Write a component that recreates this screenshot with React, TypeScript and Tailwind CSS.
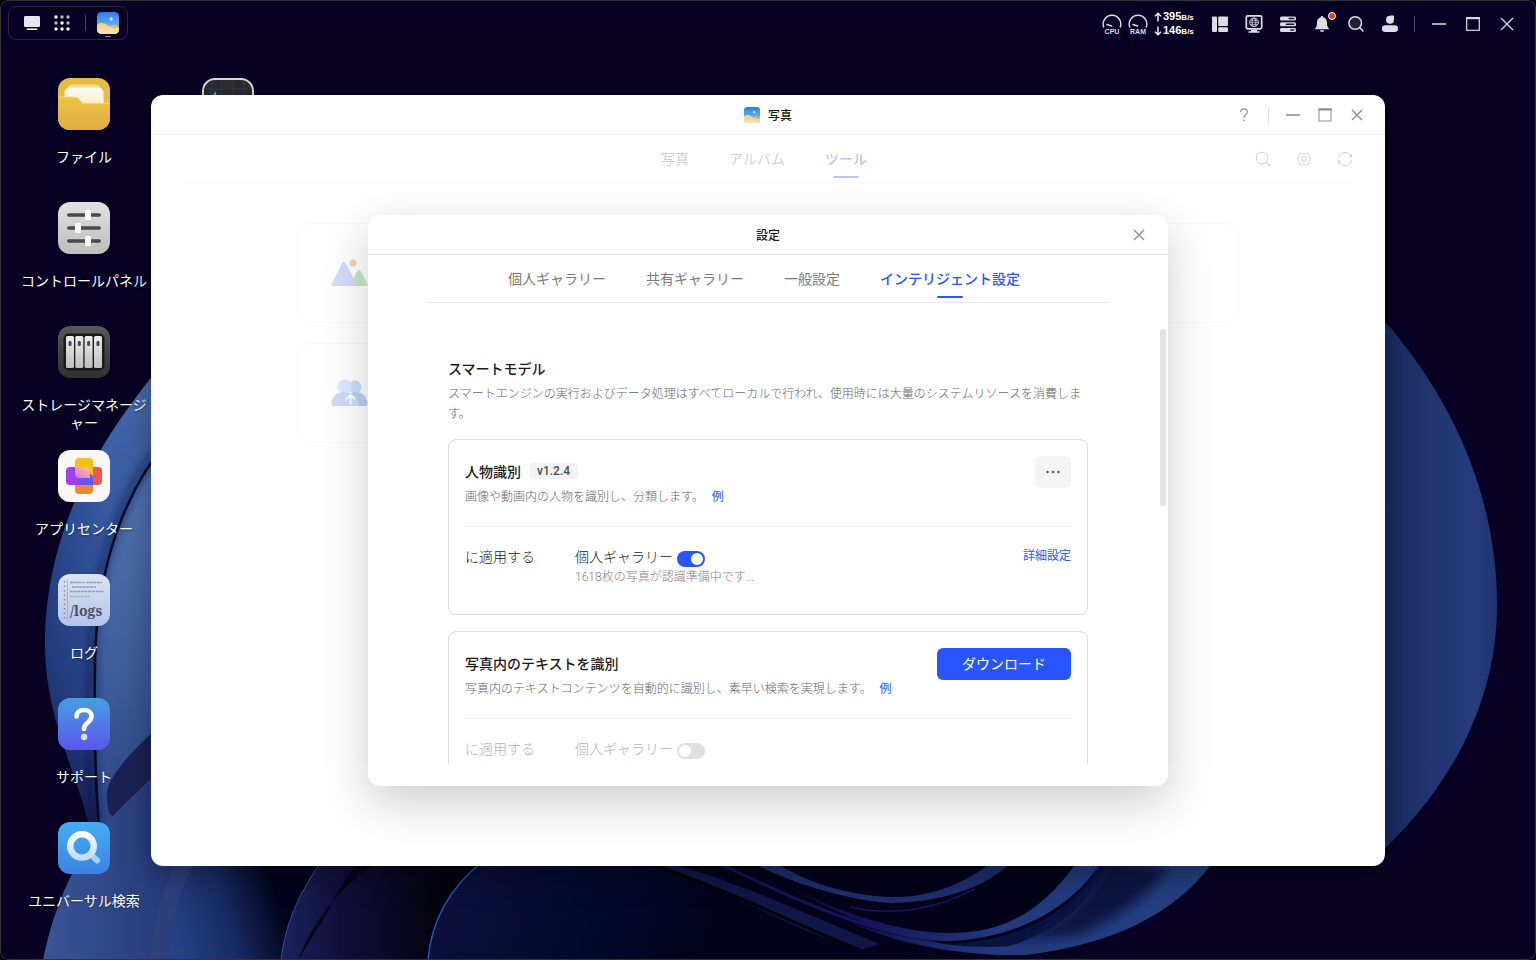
import { useState } from 'react';
import type { FC, ReactNode } from 'react';

interface IconProps {
  className?: string;
}

interface DesktopApp {
  name: string;
  icon: ReactNode;
}

interface ModelCardProps {
  id: string;
  title: string;
  version?: string;
  description: string;
  action: ReactNode;
  enabled: boolean;
  status?: string;
}

/* ---------- Wallpaper ---------- */

const Wallpaper: FC = () => (
  <svg
    className="absolute inset-0 h-full w-full"
    viewBox="0 0 1536 960"
    preserveAspectRatio="xMidYMid slice"
    aria-hidden="true"
  >
    <defs>
      <linearGradient id="petalOuter" x1="0" y1="0" x2="1" y2="0">
        <stop offset="0" stopColor="#1f3a78" />
        <stop offset="0.4" stopColor="#34569f" />
        <stop offset="1" stopColor="#3f62a8" />
      </linearGradient>
      <linearGradient id="petalFade" x1="0" y1="0" x2="0" y2="1">
        <stop offset="0" stopColor="#5f86c4" stopOpacity="0.5" />
        <stop offset="0.5" stopColor="#2a4a90" stopOpacity="0.2" />
        <stop offset="1" stopColor="#0a0a3a" stopOpacity="0.75" />
      </linearGradient>
      <linearGradient id="petalInner" x1="0" y1="0" x2="0" y2="1">
        <stop offset="0" stopColor="#5478b6" />
        <stop offset="0.5" stopColor="#40629f" />
        <stop offset="1" stopColor="#2c4584" />
      </linearGradient>
      <linearGradient id="base" x1="45" y1="0" x2="290" y2="0" gradientUnits="userSpaceOnUse">
        <stop offset="0" stopColor="#3a5596" />
        <stop offset="0.5" stopColor="#263a7a" />
        <stop offset="0.65" stopColor="#203a7a" />
        <stop offset="1" stopColor="#04051f" />
      </linearGradient>
      <linearGradient id="baseBlue" x1="168" y1="920" x2="275" y2="890" gradientUnits="userSpaceOnUse">
        <stop offset="0" stopColor="#264286" />
        <stop offset="0.5" stopColor="#182c64" />
        <stop offset="1" stopColor="#03041c" />
      </linearGradient>
      <linearGradient id="fold" x1="285" y1="0" x2="440" y2="0" gradientUnits="userSpaceOnUse">
        <stop offset="0" stopColor="#1a2258" />
        <stop offset="0.35" stopColor="#120e3c" />
        <stop offset="1" stopColor="#03020f" />
      </linearGradient>
      <linearGradient id="bowl" x1="430" y1="860" x2="700" y2="960" gradientUnits="userSpaceOnUse">
        <stop offset="0" stopColor="#0f1040" />
        <stop offset="0.5" stopColor="#040a30" />
        <stop offset="1" stopColor="#01031a" />
      </linearGradient>
      <linearGradient id="ribbon" x1="850" y1="0" x2="1210" y2="0" gradientUnits="userSpaceOnUse">
        <stop offset="0" stopColor="#120f52" />
        <stop offset="0.4" stopColor="#22397c" />
        <stop offset="1" stopColor="#243f80" />
      </linearGradient>
      <linearGradient id="rightPetal" x1="1385" y1="0" x2="1497" y2="0" gradientUnits="userSpaceOnUse">
        <stop offset="0" stopColor="#1b2c60" />
        <stop offset="0.8" stopColor="#263c7c" />
        <stop offset="1" stopColor="#1f3472" />
      </linearGradient>
      <filter id="soft" x="-20%" y="-20%" width="140%" height="140%">
        <feGaussianBlur stdDeviation="5" />
      </filter>
    </defs>
    <rect width="1536" height="960" fill="#080023" />

    {/* Left petals */}
    <path d="M170 355C110 425 45 520 45 645C46 720 75 765 92 835L200 835L200 355Z" fill="url(#petalOuter)" />
    <path d="M170 355C110 425 45 520 45 645C46 720 75 765 92 835L200 835L200 355Z" fill="url(#petalFade)" />
    <path d="M170 438C125 490 97 565 96 660C95 730 96 780 101 835L200 835L200 438Z" fill="url(#petalInner)" />
    <path d="M168 438C123 490 94 565 92 660C91 730 92 780 96 825" fill="none" stroke="#0a1038" strokeWidth="8" opacity="0.5" filter="url(#soft)" />
    <path d="M170 438C125 490 97 565 95 660C94 730 95 780 99 825" fill="none" stroke="#060828" strokeWidth="2.500" />
    <path d="M43 960C54 905 78 850 113 816C125 803 138 790 160 768L340 768L340 960Z" fill="url(#base)" />
    <path d="M165 722C140 742 104 778 107 797C107 808 109 815 113 816C125 803 145 784 165 766Z" fill="#1b2252" />

    {/* Bottom folds */}
    <path d="M150 960C152 925 162 890 178 860L196 860C180 890 168 925 170 960Z" fill="#34427c" opacity="0.6" />
    <path d="M170 960C168 925 180 890 196 860L340 860L300 960Z" fill="url(#baseBlue)" />
    <path d="M281 960C285 925 298 895 321 862L480 862L440 960Z" fill="url(#fold)" />
    <path d="M281 960C285 925 298 895 321 862" fill="none" stroke="#2d4fa6" strokeWidth="1" />
    <path d="M298 960C312 925 335 890 378 862L358 862C345 880 334 895 328 912Z" fill="#02020f" opacity="0.8" />
    <path d="M428 960C431 925 447 890 482 862L900 862L960 960Z" fill="url(#bowl)" />
    <path d="M428 960C431 925 447 890 482 862" fill="none" stroke="#2456b8" strokeWidth="1.500" />

    {/* Ribbons running down to the right */}
    <path d="M640 862C720 885 780 925 870 948L960 960L1010 960C1100 950 1180 915 1214 862Z" fill="#03021a" />
    <path d="M665 862C740 882 800 912 880 944L860 950C780 925 730 890 650 862Z" fill="#101648" />
    <path d="M644 862C730 890 790 922 860 950" fill="none" stroke="#01010a" strokeWidth="3" />
    <path d="M715 862C790 895 850 932 1000 955" fill="none" stroke="#15145c" strokeWidth="3" />
    <path d="M750 862C790 882 840 899 890 903C945 902 985 887 1012 862L992 862C960 887 925 898 890 897C845 895 805 882 775 862Z" fill="#1d2f6e" />
    <path d="M850 907C895 917 935 909 975 889" fill="none" stroke="#17145a" strokeWidth="1.500" />
    <path d="M800 893C860 925 910 942 950 941C1015 938 1070 910 1102 862L1077 862C1040 915 1000 932 955 933C915 934 865 922 800 893Z" fill="url(#ribbon)" />
    <path d="M1102 862C1070 915 1020 940 950 944L1030 953C1080 947 1125 925 1160 862Z" fill="#0a1340" />
    <path d="M850 922C900 945 960 956 1025 955C1110 945 1175 915 1213 862L1110 862C1090 905 1060 930 1010 946C965 950 900 940 850 922Z" fill="url(#ribbon)" />
    <path d="M1104 860C1090 900 1055 930 1010 942L1080 934C1120 915 1150 895 1168 868Z" fill="#0a1542" filter="url(#soft)" />

    {/* Right petal */}
    <path d="M1370 305C1455 395 1497 500 1497 605C1497 700 1452 790 1370 862Z" fill="url(#rightPetal)" />
  </svg>
);

/* ---------- App icons ---------- */

const PhotosIcon: FC<IconProps> = ({ className }) => (
  <svg className={className} viewBox="0 0 24 24" aria-hidden="true">
    <defs>
      <linearGradient id="sky" x1="0" y1="0" x2="0" y2="1">
        <stop offset="0" stopColor="#2e7cea" />
        <stop offset="0.7" stopColor="#6bb8f6" />
      </linearGradient>
      <linearGradient id="sand" x1="0" y1="0" x2="0" y2="1">
        <stop offset="0" stopColor="#f6c98a" />
        <stop offset="1" stopColor="#fae3b4" />
      </linearGradient>
      <clipPath id="photosClip">
        <rect width="24" height="24" rx="5" />
      </clipPath>
    </defs>
    <g clipPath="url(#photosClip)">
      <rect width="24" height="24" fill="url(#sky)" />
      <circle cx="15.4" cy="7.6" r="1.8" fill="#cdeafe" />
      <path d="M10 24C11 19 14 14 18 14C21 14 22 16 24 15.500V24Z" fill="#e9b46a" />
      <path d="M0 14C3 11 7 11.500 10 13.500C14 16 17 18 24 17.500V24H0Z" fill="url(#sand)" />
    </g>
  </svg>
);

const FilesIcon: FC = () => (
  <svg className="size-13" viewBox="0 0 52 52" aria-hidden="true">
    <defs>
      <linearGradient id="folderFront" x1="0" y1="0" x2="0" y2="1">
        <stop offset="0" stopColor="#edc348" />
        <stop offset="1" stopColor="#dfae3d" />
      </linearGradient>
      <linearGradient id="folderPaper" x1="0" y1="0" x2="0" y2="1">
        <stop offset="0" stopColor="#fffdf5" />
        <stop offset="1" stopColor="#f7e3b0" />
      </linearGradient>
    </defs>
    <rect width="52" height="52" rx="12" fill="#e8bc3c" />
    <path d="M10 14V10C10 8 11.500 6.500 14 6.500H38C40.500 6.500 42 8 42 10V14Z" fill="#f4dc95" />
    <rect x="6.500" y="9.500" width="39" height="26" rx="5" fill="url(#folderPaper)" />
    <path d="M0 19H16.500C18.500 19 19.500 19.700 21 21.200L23.500 23.800C24.800 25 26 25.300 28 25.300H52V40C52 47 47 52 40 52H12C5 52 0 47 0 40Z" fill="url(#folderFront)" />
    <path d="M0 19H16.500C18.500 19 19.500 19.700 21 21.200L23.500 23.800C24.800 25 26 25.300 28 25.300H52" fill="none" stroke="#f5dc8c" strokeWidth="0.8" />
  </svg>
);

const ControlPanelIcon: FC = () => (
  <svg className="size-13" viewBox="0 0 52 52" aria-hidden="true">
    <defs>
      <linearGradient id="silver" x1="0" y1="0" x2="0" y2="1">
        <stop offset="0" stopColor="#e2e2e2" />
        <stop offset="1" stopColor="#bdbdbd" />
      </linearGradient>
    </defs>
    <rect width="52" height="52" rx="12" fill="url(#silver)" />
    <g stroke="#4a4a4a" strokeWidth="3.600" strokeLinecap="round">
      <path d="M10.800 13H41.200M10.800 26H41.200M10.800 39H41.200" />
    </g>
    <g fill="#fafafa">
      <rect x="27" y="8" width="6" height="10" rx="1.500" />
      <rect x="17" y="21" width="6" height="10" rx="1.500" />
      <rect x="27" y="34" width="6" height="10" rx="1.500" />
    </g>
  </svg>
);

const StorageIcon: FC = () => (
  <svg className="size-13" viewBox="0 0 52 52" aria-hidden="true">
    <defs>
      <linearGradient id="caseFill" x1="0" y1="0" x2="0" y2="1">
        <stop offset="0" stopColor="#585858" />
        <stop offset="1" stopColor="#303030" />
      </linearGradient>
      <linearGradient id="driveFill" x1="0" y1="0" x2="0" y2="1">
        <stop offset="0" stopColor="#ededed" />
        <stop offset="1" stopColor="#bdbdbd" />
      </linearGradient>
    </defs>
    <rect width="52" height="52" rx="12" fill="url(#caseFill)" />
    <rect x="5.500" y="7.500" width="41" height="37" rx="5" fill="#191919" />
    {[8, 17.3, 26.6, 36].map((x) => (
      <g key={x}>
        <rect x={x} y="10" width="8" height="32" rx="1.500" fill="url(#driveFill)" />
        <rect x={x + 2.5} y="15" width="3" height="5" rx="1" fill="#4a4a55" />
      </g>
    ))}
  </svg>
);

const AppCenterIcon: FC = () => (
  <svg className="size-13" viewBox="0 0 52 52" aria-hidden="true">
    <defs>
      <linearGradient id="blend" x1="0" y1="1" x2="1" y2="0">
        <stop offset="0" stopColor="#d374d8" />
        <stop offset="1" stopColor="#ffc488" />
      </linearGradient>
    </defs>
    <rect width="52" height="52" rx="12" fill="#f8f8f9" />
    <rect x="17" y="26" width="18" height="18" rx="4" fill="#f5862e" />
    <rect x="26" y="17" width="18" height="18" rx="4" fill="#ea5a4b" />
    <rect x="17" y="8" width="18" height="20" rx="4" fill="#fbbd18" />
    <rect x="8" y="17" width="20" height="18" rx="4" fill="#a33df0" />
    <path d="M20 24H31C33.500 24 35 25.500 35 28V35H24C21.500 35 20 33 20 31Z" fill="#6a55ee" />
    <path d="M17 17H32V28H21C18.500 28 17 26.500 17 24Z" fill="url(#blend)" />
  </svg>
);

const LogsIcon: FC = () => (
  <svg className="size-13" viewBox="0 0 52 52" aria-hidden="true">
    <defs>
      <linearGradient id="logPaper" x1="0" y1="0" x2="0" y2="1">
        <stop offset="0" stopColor="#dde4f4" />
        <stop offset="1" stopColor="#b4c3ea" />
      </linearGradient>
    </defs>
    <rect width="52" height="52" rx="12" fill="url(#logPaper)" />
    <path d="M6.500 7V45" stroke="#8089a0" strokeWidth="1.500" strokeDasharray="1.500 3" />
    <path d="M9.500 5V46" stroke="#9aa6c2" strokeWidth="0.700" />
    <g fill="none" strokeWidth="1.600" opacity="0.75" strokeDasharray="3 0.6">
      <path d="M12 8.500H20M28 8.500H44M14 13H38M12 17.500H34" stroke="#7d879c" />
      <path d="M20 8.500H27" stroke="#5aa7ee" />
      <path d="M34 17.500H38" stroke="#c667e0" />
      <path d="M38 17.500H46" stroke="#7d879c" />
      <path d="M12 22.500H32" stroke="#6cc98a" />
    </g>
    <text x="12" y="42" fontFamily="Noto Serif, DejaVu Serif, serif" fontSize="14" fontWeight="700" fill="#4a4f5c">
      /logs
    </text>
  </svg>
);

const SupportIcon: FC = () => (
  <svg className="size-13" viewBox="0 0 52 52" aria-hidden="true">
    <defs>
      <linearGradient id="supportFill" x1="0" y1="0" x2="0" y2="1">
        <stop offset="0" stopColor="#459fe0" />
        <stop offset="1" stopColor="#5c56ee" />
      </linearGradient>
    </defs>
    <rect width="52" height="52" rx="12" fill="url(#supportFill)" />
    <path
      d="M18.500 18.500C18.500 14.500 21.500 12 26 12C30.500 12 33.500 14.600 33.500 18.300C33.500 21.500 31.500 23 29.500 24.700C27.300 26.500 26 27.800 26 31"
      fill="none"
      stroke="#fff"
      strokeWidth="4.600"
      strokeLinecap="round"
    />
    <circle cx="26" cy="39" r="3.200" fill="#dcdcfc" />
  </svg>
);

const UniversalSearchIcon: FC = () => (
  <svg className="size-13" viewBox="0 0 52 52" aria-hidden="true">
    <defs>
      <linearGradient id="searchFill" x1="0" y1="0" x2="0" y2="1">
        <stop offset="0" stopColor="#46aef2" />
        <stop offset="1" stopColor="#3b82e4" />
      </linearGradient>
      <linearGradient id="ring" x1="0" y1="0" x2="0" y2="1">
        <stop offset="0" stopColor="#fff" />
        <stop offset="1" stopColor="#b9dcfa" />
      </linearGradient>
    </defs>
    <rect width="52" height="52" rx="12" fill="url(#searchFill)" />
    <path d="M35.500 35L39 38.500" stroke="#a9d2f8" strokeWidth="6" strokeLinecap="round" />
    <path d="M24 9a15 15 0 1 0 0 30a15 15 0 1 0 0-30ZM24 15.500a8.500 8.500 0 1 1 0 17a8.500 8.500 0 1 1 0-17Z" fill="url(#ring)" />
  </svg>
);

const MonitorIcon: FC = () => (
  <svg className="size-13" viewBox="0 0 52 52" aria-hidden="true">
    <rect x="1" y="1" width="50" height="50" rx="12" fill="#2b2d31" stroke="#dcdcdc" strokeWidth="2" />
    <path d="M10 2V50M20 2V50M31 2V50M42 2V50M2 11H50" stroke="#3d4045" strokeWidth="0.700" />
    <path d="M9 26L13 15L17 26" fill="none" stroke="#4db3ea" strokeWidth="1.500" />
  </svg>
);

/* ---------- Top bar ---------- */

const Gauge: FC<{ label: string }> = ({ label }) => (
  <div className="flex w-5 flex-col items-center">
    <svg className="h-3.5 w-5" viewBox="0 0 20 14" fill="none" stroke="currentColor" strokeLinecap="round" aria-hidden="true">
      <path d="M1.700 13A8.800 8.800 0 1 1 18.300 13" strokeWidth="1.400" />
      <path d="M5 10.500L9.500 12" strokeWidth="1.600" />
    </svg>
    <span className="text-[7px] leading-[7px] font-bold">{label}</span>
  </div>
);

const NetworkRate: FC<{ direction: 'up' | 'down'; value: string }> = ({ direction, value }) => (
  <div className="flex items-center gap-px leading-3">
    <svg className="h-2.5 w-2 shrink-0" viewBox="0 0 8 10" fill="none" stroke="currentColor" strokeWidth="1.400" aria-hidden="true">
      {direction === 'up' ? <path d="M4 9.500V1.500M1 4.200L4 1.200L7 4.200" /> : <path d="M4 0.500V8.500M1 5.800L4 8.800L7 5.800" />}
    </svg>
    <span className="text-[11px] font-bold">
      {value}
      <span className="text-[8px]">B/s</span>
    </span>
  </div>
);

const TopBar: FC = () => (
  <header className="relative flex h-10 items-end justify-between pr-[19px] pl-2 font-['Liberation_Sans',sans-serif] text-[#dedce6]">
    <div className="flex h-[34px] items-center rounded-lg border border-[#2d2740] pr-2 pl-[15px]">
      <button type="button" aria-label="デスクトップ" className="size-4">
        <svg viewBox="0 0 16 16" aria-hidden="true">
          <rect x="0" y="1" width="16" height="11" rx="1.200" fill="#e6e6ea" />
          <rect x="2.500" y="13.500" width="11" height="1.500" rx="0.700" fill="#fff" />
        </svg>
      </button>
      <button type="button" aria-label="アプリ一覧" className="ml-3.5 size-4">
        <svg viewBox="0 0 16 16" aria-hidden="true">
          {[2, 8, 14].map((y) =>
            [2, 8, 14].map((x) => (
              <circle key={`${x}-${y}`} cx={x} cy={y} r="1.700" fill={(x + y) % 5 === 0 || x > y ? '#b9b6c4' : '#fff'} />
            )),
          )}
        </svg>
      </button>
      <span className="ml-[15px] h-4 w-px bg-[#4a445c]" />
      <button type="button" aria-label="写真" className="relative ml-[11px]">
        <PhotosIcon className="size-[22px]" />
        <span className="absolute -bottom-[3px] left-2 h-px w-1.5 bg-[#8d899b]" />
      </button>
    </div>

    <div className="flex h-8 items-center gap-3.5">
      <div className="mr-0.5 flex items-center gap-1.5">
        <Gauge label="CPU" />
        <Gauge label="RAM" />
        <div className="w-10 text-white">
          <NetworkRate direction="up" value="395" />
          <NetworkRate direction="down" value="146" />
        </div>
      </div>
      <button type="button" aria-label="ウィジェット" className="size-5">
        <svg viewBox="0 0 20 20" fill="currentColor" aria-hidden="true">
          <rect x="2" y="2.500" width="5" height="15.500" rx="1" />
          <rect x="8.200" y="2.500" width="9.800" height="9.500" rx="1" />
          <rect x="8.200" y="13.200" width="9.800" height="4.800" rx="1" />
        </svg>
      </button>
      <button type="button" aria-label="リモートアクセス" className="size-5">
        <svg viewBox="0 0 20 20" fill="none" stroke="currentColor" aria-hidden="true">
          <rect x="2.300" y="1.800" width="15.400" height="13" rx="1.500" strokeWidth="1.700" />
          <circle cx="10" cy="8.300" r="4.300" strokeWidth="1" />
          <ellipse cx="10" cy="8.300" rx="1.900" ry="4.300" strokeWidth="0.800" />
          <path d="M5.700 8.300H14.300M6.300 6.200H13.700M6.300 10.400H13.700" strokeWidth="0.700" />
          <path d="M7 16.500H13M4.500 18H15.500" strokeWidth="1.600" />
        </svg>
      </button>
      <button type="button" aria-label="タスク" className="size-5">
        <svg viewBox="0 0 20 20" fill="currentColor" aria-hidden="true">
          <rect x="2" y="2.500" width="16" height="4" rx="1.500" />
          <rect x="2" y="8.200" width="16" height="4" rx="1.500" />
          <rect x="2" y="14" width="16" height="4" rx="1.500" />
          <rect x="10.500" y="3.800" width="6" height="1.500" rx="0.700" fill="#1a1333" />
          <rect x="7.500" y="9.500" width="9" height="1.500" rx="0.700" fill="#1a1333" />
          <rect x="12" y="15.300" width="4.500" height="1.500" rx="0.700" fill="#1a1333" />
        </svg>
      </button>
      <button type="button" aria-label="通知" className="relative size-5">
        <svg viewBox="0 0 20 20" fill="currentColor" aria-hidden="true">
          <path d="M10 2C10.700 2 11.200 2.500 11.200 3.300C13.800 3.900 15 6 15 8.500C15 12 15.700 13.200 17.200 15.200H2.800C4.300 13.200 5 12 5 8.500C5 6 6.200 3.900 8.800 3.300C8.800 2.500 9.300 2 10 2Z" />
          <path d="M7.800 16.300H12.200C12 17.500 11.200 18 10 18C8.800 18 8 17.500 7.800 16.300Z" />
        </svg>
        <span className="absolute -top-0.5 -right-1 size-2 rounded-full border border-white bg-[#e4391f]" />
      </button>
      <button type="button" aria-label="検索" className="size-5">
        <svg viewBox="0 0 20 20" fill="none" stroke="currentColor" strokeLinecap="round" aria-hidden="true">
          <circle cx="9.200" cy="9" r="6.300" strokeWidth="1.500" fill="#241d3a" />
          <path d="M13.800 13.800L17 17" strokeWidth="1.600" />
        </svg>
      </button>
      <button type="button" aria-label="ユーザー" className="size-5">
        <svg viewBox="0 0 20 20" fill="currentColor" aria-hidden="true">
          <circle cx="10" cy="5.800" r="4" />
          <rect x="10" y="1.500" width="4" height="4.500" rx="0.800" />
          <rect x="2" y="11.300" width="16" height="6.700" rx="3.300" />
        </svg>
      </button>
      <span className="h-4 w-px bg-[#4a445c]" />
      <button type="button" aria-label="最小化" className="size-5">
        <svg viewBox="0 0 20 20" stroke="currentColor" strokeWidth="1.500" aria-hidden="true">
          <path d="M3 10H17" />
        </svg>
      </button>
      <button type="button" aria-label="最大化" className="size-5">
        <svg viewBox="0 0 20 20" fill="none" stroke="currentColor" aria-hidden="true">
          <rect x="3.700" y="3.700" width="12.600" height="12.600" strokeWidth="1.200" />
          <path d="M3.500 4.300H16.500" strokeWidth="1.800" />
        </svg>
      </button>
      <button type="button" aria-label="閉じる" className="size-5">
        <svg viewBox="0 0 20 20" stroke="currentColor" strokeWidth="1.300" aria-hidden="true">
          <path d="M4 4L16 16M16 4L4 16" />
        </svg>
      </button>
    </div>
  </header>
);

/* ---------- Desktop ---------- */

const desktopApps: DesktopApp[] = [
  { name: 'ファイル', icon: <FilesIcon /> },
  { name: 'コントロールパネル', icon: <ControlPanelIcon /> },
  { name: 'ストレージマネージャー', icon: <StorageIcon /> },
  { name: 'アプリセンター', icon: <AppCenterIcon /> },
  { name: 'ログ', icon: <LogsIcon /> },
  { name: 'サポート', icon: <SupportIcon /> },
  { name: 'ユニバーサル検索', icon: <UniversalSearchIcon /> },
];

const Desktop: FC = () => (
  <div className="relative flex px-3 pt-[38px]">
    <ul className="w-36">
      {desktopApps.map((app) => (
        <li key={app.name} className="h-31 px-2">
          <button type="button" className="flex w-full flex-col items-center gap-[17px] text-white">
            {app.icon}
            <span className="text-sm leading-[18px] break-all [text-shadow:0_1px_2px_rgba(0,0,0,0.5)]">{app.name}</span>
          </button>
        </li>
      ))}
    </ul>
    <ul className="w-36">
      <li className="flex justify-center">
        <MonitorIcon />
      </li>
    </ul>
  </div>
);

/* ---------- Photos window ---------- */

const TabButton: FC<{ label: string; active: boolean; onClick: () => void }> = ({ label, active, onClick }) => (
  <button
    type="button"
    role="tab"
    aria-selected={active}
    onClick={onClick}
    className={`relative h-full pb-0.5 text-sm ${active ? 'font-medium text-[#2955ff]' : 'text-[#7a7a7a]'}`}
  >
    {label}
    {active && <span className="absolute bottom-1 left-1/2 h-0.5 w-6.5 -translate-x-1/2 rounded-full bg-[#2955ff]" />}
  </button>
);

const TitleBar: FC = () => (
  <div className="grid h-10 grid-cols-[1fr_auto_1fr] items-center border-b border-[#ececec]">
    <span />
    <h1 className="flex items-center gap-2 text-xs font-medium text-[#1a1a1a]">
      <PhotosIcon className="size-4" />
      写真
    </h1>
    <div className="flex items-center justify-end gap-4 pr-5 text-[#8a8a8a]">
      <button type="button" aria-label="ヘルプ" className="size-4">
        <svg viewBox="0 0 16 16" fill="none" stroke="currentColor" strokeWidth="1.200" aria-hidden="true">
          <path d="M4.700 5C4.700 3 6 1.800 8 1.800C10 1.800 11.300 3 11.300 4.800C11.300 6.300 10.400 7 9.500 7.800C8.500 8.700 8 9.300 8 11" />
          <path d="M8 12.800V14.300" strokeWidth="1.400" />
        </svg>
      </button>
      <span className="h-4 w-px bg-[#dedede]" />
      <button type="button" aria-label="最小化" className="size-4">
        <svg viewBox="0 0 16 16" stroke="currentColor" strokeWidth="1.400" aria-hidden="true">
          <path d="M1 8H15" />
        </svg>
      </button>
      <button type="button" aria-label="最大化" className="size-4">
        <svg viewBox="0 0 16 16" fill="none" stroke="currentColor" aria-hidden="true">
          <rect x="2" y="2" width="12" height="12" strokeWidth="1" />
          <path d="M1.500 2.500H14.500" strokeWidth="2" />
        </svg>
      </button>
      <button type="button" aria-label="閉じる" className="size-4">
        <svg viewBox="0 0 16 16" stroke="currentColor" strokeWidth="1.200" aria-hidden="true">
          <path d="M3 3L13 13M13 3L3 13" />
        </svg>
      </button>
    </div>
  </div>
);

const ToolsPage: FC = () => {
  const [tab, setTab] = useState('ツール');
  return (
    <div className="opacity-35">
      <nav className="mx-8 grid h-12 grid-cols-[1fr_auto_1fr] items-center border-b border-[#f0f0f0]">
        <span />
        <div role="tablist" className="flex h-full gap-10 pr-2">
          {['写真', 'アルバム', 'ツール'].map((name) => (
            <TabButton key={name} label={name} active={tab === name} onClick={() => setTab(name)} />
          ))}
        </div>
        <div className="flex justify-end gap-[25px] text-[#7a7a7a]">
          <button type="button" aria-label="検索" className="size-4">
            <svg viewBox="0 0 16 16" fill="none" stroke="currentColor" aria-hidden="true">
              <circle cx="7" cy="7" r="5.800" />
              <path d="M11.200 11.200L15 15" />
            </svg>
          </button>
          <button type="button" aria-label="設定" className="size-4">
            <svg viewBox="0 0 16 16" fill="none" stroke="currentColor" strokeLinejoin="round" aria-hidden="true">
              <path d="M4.200 1.800C5 1.600 5.400 2.800 6.200 2.800H9.800C10.600 2.800 11 1.600 11.800 1.800L13.200 4.200C12.800 4.900 12.600 5.200 13 6L14.600 8L13 10C12.600 10.800 12.800 11.100 13.200 11.800L11.800 14.200C11 14.400 10.600 13.200 9.800 13.200H6.200C5.400 13.200 5 14.400 4.200 14.200L2.800 11.800C3.200 11.100 3.400 10.800 3 10L1.400 8L3 6C3.400 5.200 3.200 4.900 2.800 4.200Z" />
              <circle cx="8" cy="8" r="2.400" />
            </svg>
          </button>
          <button type="button" aria-label="更新" className="size-4">
            <svg viewBox="0 0 16 16" fill="none" stroke="currentColor" aria-hidden="true">
              <path d="M1.500 7.200A6.500 6.500 0 0 1 14 5.500M14.500 8.800A6.500 6.500 0 0 1 2 10.500" />
              <path d="M14.500 3V6H12M1.500 13V10H4" />
            </svg>
          </button>
        </div>
      </nav>
      <div className="mx-auto mt-10 grid max-w-[942px] grid-cols-3 gap-5">
        <div className="flex h-25 items-center rounded-xl border border-[#ececec] pl-8">
          <svg className="h-8 w-10" viewBox="0 0 40 32" aria-hidden="true">
            <circle cx="23" cy="6" r="3.500" fill="#ee7a3a" />
            <path d="M20 29L27 14.500C28 12.500 30 12.500 31 14.500L37.500 27C38 28.300 37.500 29 36 29Z" fill="#5fc05f" />
            <path d="M3 29C1.500 29 1 28 1.800 26.500L12 6.500C13 4.500 15 4.500 16 6.500L26.500 26.500C27.200 28 26.500 29 25 29Z" fill="#7f9ff0" />
          </svg>
        </div>
        <div className="h-25 rounded-xl border border-[#ececec]" />
        <div className="h-25 rounded-xl border border-[#ececec]" />
        <div className="flex h-25 items-center rounded-xl border border-[#ececec] pl-8">
          <svg className="h-8 w-10" viewBox="0 0 40 32" aria-hidden="true">
            <circle cx="25" cy="10" r="6.500" fill="#64adf2" />
            <path d="M16 29C16 20 20 15 26 15C33 15 37 20 37.500 26C37.600 28 37 29 35.500 29Z" fill="#4a7cea" />
            <circle cx="14.500" cy="9.500" r="7" fill="#a0c2f8" />
            <path d="M1.500 27C1.500 19.500 7 15 14.500 15C22 15 28 19.500 28.500 27C28.500 28.500 28 29 27 29H3C2 29 1.500 28.500 1.500 27Z" fill="#729cf2" />
            <path d="M20.500 27.500V18.500M16 22.500L20.500 18L25 22.500" fill="none" stroke="#fff" strokeWidth="2" />
          </svg>
        </div>
      </div>
    </div>
  );
};

/* ---------- Settings dialog ---------- */

const ModelCard: FC<ModelCardProps> = ({ id, title, version, description, action, enabled, status }) => {
  const [on, setOn] = useState(enabled);
  return (
    <section className="rounded-lg border border-[#d9d9d9] px-4 pt-4 pb-[27px]">
      <div className="flex items-start justify-between border-b border-[#ececec] pb-5">
        <div className="pt-1.5">
          <h3 className="flex items-center gap-2 text-sm leading-[18px] font-medium text-[#1a1a1a]">
            {title}
            {version && (
              <span className="rounded bg-[#f3f3f3] px-2 font-['Roboto',sans-serif] text-xs leading-4 text-[#4d4d4d]">
                {version}
              </span>
            )}
          </h3>
          <p className="mt-1.5 text-xs leading-5 font-light text-[#666]">
            {description}
            <a href="#example" className="ml-2 font-normal text-[#2955ff]">
              例
            </a>
          </p>
        </div>
        {action}
      </div>
      <div className={`flex items-start pt-5 text-sm leading-[18px] ${enabled ? 'text-[#1a1a1a]' : 'text-[#b3b3b3]'}`}>
        <span className="w-[110px] font-light">に適用する</span>
        <div className="grow font-light">
          <div className="flex h-5 items-start gap-1">
            <label htmlFor={id}>個人ギャラリー</label>
            <input
              id={id}
              type="checkbox"
              role="switch"
              checked={on}
              disabled={!enabled}
              onChange={(e) => setOn(e.target.checked)}
              className="flex h-4 w-7 appearance-none items-center self-end rounded-full bg-[#e0e0e0] px-0.5 before:size-3 before:rounded-full before:bg-white checked:justify-end checked:bg-[#2955ff]"
            />
          </div>
          {status && <p className="font-['Roboto','Noto_Sans_CJK_JP',sans-serif] text-xs leading-5 text-[#808080]">{status}</p>}
        </div>
        {enabled && (
          <a href="#details" className="text-xs leading-4 text-[#2955ff]">
            詳細設定
          </a>
        )}
      </div>
    </section>
  );
};

const SettingsDialog: FC = () => {
  const [tab, setTab] = useState('インテリジェント設定');
  return (
    <div
      role="dialog"
      aria-labelledby="settings-title"
      className="flex w-full max-w-[800px] flex-col overflow-hidden rounded-xl bg-white shadow-[0_16px_48px_rgba(0,0,0,0.2)]"
    >
      <div className="grid h-10 shrink-0 grid-cols-[1fr_auto_1fr] items-center border-b border-[#e6e6e6]">
        <span />
        <h2 id="settings-title" className="text-xs font-medium text-[#1a1a1a]">
          設定
        </h2>
        <button type="button" aria-label="閉じる" className="mr-[21px] size-4 justify-self-end text-[#8a8a8a]">
          <svg viewBox="0 0 16 16" stroke="currentColor" strokeWidth="1.200" aria-hidden="true">
            <path d="M3 3L13 13M13 3L3 13" />
          </svg>
        </button>
      </div>
      <div role="tablist" className="mx-15 flex h-12 shrink-0 justify-center gap-10 border-b border-[#e9e9e9] pr-2">
        {['個人ギャラリー', '共有ギャラリー', '一般設定', 'インテリジェント設定'].map((name) => (
          <TabButton key={name} label={name} active={tab === name} onClick={() => setTab(name)} />
        ))}
      </div>

      <div className="relative mt-6.5 mb-5.5 min-h-0 grow">
        <div className="h-full overflow-y-auto px-20 pt-7.5 [scrollbar-width:none]">
          <h2 className="text-sm leading-[18px] font-medium text-[#1a1a1a]">スマートモデル</h2>
          <p className="mt-1.5 text-xs leading-5 font-light text-[#666]">
            スマートエンジンの実行およびデータ処理はすべてローカルで行われ、使用時には大量のシステムリソースを消費します。
          </p>
          <div className="mt-4 flex flex-col gap-4">
            <ModelCard
              id="person-gallery"
              title="人物識別"
              version="v1.2.4"
              description="画像や動画内の人物を識別し、分類します。"
              enabled
              status="1618枚の写真が認識準備中です..."
              action={
                <button type="button" aria-label="その他" className="flex h-8 w-9 items-center justify-center rounded-md bg-[#f4f4f4]">
                  <svg className="size-4" viewBox="0 0 16 16" fill="#555" aria-hidden="true">
                    <circle cx="2.500" cy="8" r="1.200" />
                    <circle cx="8" cy="8" r="1.200" />
                    <circle cx="13.500" cy="8" r="1.200" />
                  </svg>
                </button>
              }
            />
            <ModelCard
              id="text-gallery"
              title="写真内のテキストを識別"
              description="写真内のテキストコンテンツを自動的に識別し、素早い検索を実現します。"
              enabled={false}
              action={
                <button type="button" className="h-8 rounded-md bg-[#2955ff] px-[25px] pb-0.5 text-sm text-white">
                  ダウンロード
                </button>
              }
            />
          </div>
        </div>
        <div className="absolute top-0 right-0.5 h-[177px] w-1.5 rounded-full bg-[#e3e3e3]" />
      </div>
    </div>
  );
};

const App: FC = () => (
  <div className="h-screen bg-black" lang="ja">
    <div className="relative h-full overflow-hidden rounded-lg font-['Noto_Sans_CJK_JP',sans-serif]">
      <Wallpaper />
      <TopBar />
      <Desktop />

      {/* Photos window */}
      <main className="absolute top-[95px] right-[151px] bottom-[94px] left-[151px] flex flex-col overflow-hidden rounded-xl bg-white shadow-[0_8px_32px_rgba(0,0,0,0.35)]">
        <TitleBar />
        <div className="relative min-h-0 grow">
          <ToolsPage />
          <div className="absolute inset-0 flex justify-center py-20">
            <SettingsDialog />
          </div>
        </div>
      </main>

      {/* Screen edge */}
      <div className="pointer-events-none absolute inset-0 rounded-lg border border-[#333238]" />
    </div>
  </div>
);

export default App;
